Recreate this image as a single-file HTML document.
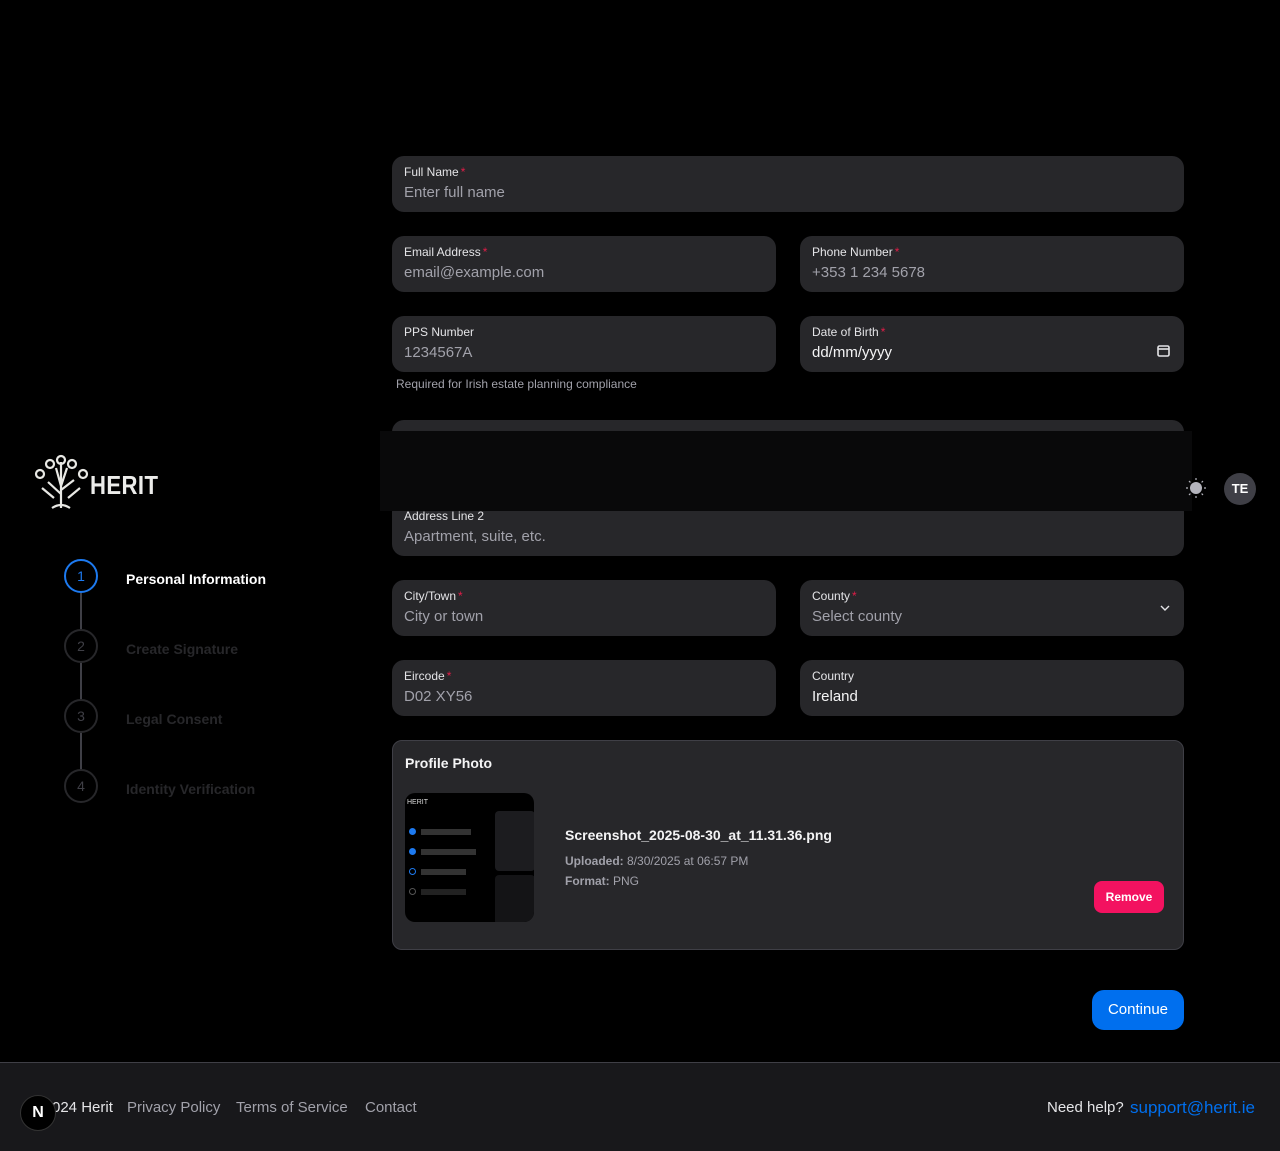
<!DOCTYPE html>
<html><head><meta charset="utf-8"><style>
*{box-sizing:border-box;margin:0;padding:0}
body{width:1280px;height:1151px;background:#000;font-family:"Liberation Sans",sans-serif;position:relative;overflow:hidden;color:#fff}
.f{position:absolute;background:#27272a;border-radius:12px;height:56px;padding:9px 12px}
.f .l{font-size:12px;color:#e4e4e7;line-height:14px;height:16px}
.f .l i{color:#e11d48;font-style:normal;margin-left:2px}
.f .v{font-size:15px;color:#a1a1aa;margin-top:3px;line-height:18px}
.f .v.w{color:#f4f4f5}
.c1{left:392px;width:384px}.c2{left:800px;width:384px}.full{left:392px;width:792px}
.step{position:absolute;left:64px;width:34px;height:34px;border-radius:50%;border:2px solid #27272a;color:#3f3f46;font-size:14px;text-align:center;line-height:30px}
.sl{position:absolute;left:126px;font-size:14px;font-weight:bold;color:#27272a}
.line{position:absolute;left:80px;width:2px;background:#3f3f46}
.ft{position:absolute;top:36px;font-size:15px;color:#a1a1aa}
</style></head><body>

<svg style="position:absolute;left:34px;top:454px" width="56" height="56" viewBox="0 0 56 56" fill="none" stroke="#e8e8e4" stroke-width="2.2">
<path d="M27 54 L27 30 M27 40 L14 28 M27 36 L40 26 M27 32 L22 14 M27 32 L33 14 M27 30 L27 8 M20 44 L8 34 M34 44 L46 34 M18 54 Q27 48 36 54"/>
<circle cx="27" cy="6" r="4"/><circle cx="16" cy="10" r="4"/><circle cx="38" cy="10" r="4"/><circle cx="6" cy="20" r="4"/><circle cx="49" cy="20" r="4"/>
</svg>
<div style="position:absolute;left:90px;top:470px;font-size:26px;font-weight:bold;color:#ececea;letter-spacing:0.5px;transform:scaleX(0.85);transform-origin:left">HERIT</div>

<div class="line" style="top:593px;height:37px"></div>
<div class="line" style="top:663px;height:37px"></div>
<div class="line" style="top:733px;height:37px"></div>
<div class="step" style="top:559px;border-color:#1d7af0;color:#1d7af0">1</div>
<div class="step" style="top:629px">2</div>
<div class="step" style="top:699px">3</div>
<div class="step" style="top:769px">4</div>
<div class="sl" style="top:571px;color:#fff">Personal Information</div>
<div class="sl" style="top:641px">Create Signature</div>
<div class="sl" style="top:711px">Legal Consent</div>
<div class="sl" style="top:781px">Identity Verification</div>

<div class="f full" style="top:156px"><div class="l">Full Name<i>*</i></div><div class="v">Enter full name</div></div>
<div class="f c1" style="top:236px"><div class="l">Email Address<i>*</i></div><div class="v">email@example.com</div></div>
<div class="f c2" style="top:236px"><div class="l">Phone Number<i>*</i></div><div class="v">+353 1 234 5678</div></div>
<div class="f c1" style="top:316px"><div class="l">PPS Number</div><div class="v">1234567A</div></div>
<div class="f c2" style="top:316px"><div class="l">Date of Birth<i>*</i></div><div class="v w">dd/mm/yyyy</div>
<svg style="position:absolute;right:14px;top:28px" width="13" height="13" viewBox="0 0 13 13" fill="none" stroke="#e4e4e7" stroke-width="1.6"><rect x="1" y="2" width="11" height="10" rx="1.5"/><path d="M1 5h11"/></svg></div>
<div style="position:absolute;left:396px;top:377px;font-size:12px;color:#a1a1aa">Required for Irish estate planning compliance</div>

<div class="f full" style="top:420px"></div>
<div class="f full" style="top:500px"><div class="l">Address Line 2</div><div class="v">Apartment, suite, etc.</div></div>
<div style="position:absolute;left:380px;top:431px;width:812px;height:80px;background:#09090a"></div>
<svg style="position:absolute;left:1185px;top:477px" width="22" height="22" viewBox="0 0 22 22"><circle cx="11" cy="11" r="6" fill="#b4b4bc"/><g stroke="#b4b4bc" stroke-width="1.2"><path d="M11 1v2M11 19v2M1 11h2M19 11h2M4 4l1.4 1.4M16.6 16.6L18 18M4 18l1.4-1.4M16.6 5.4L18 4"/></g></svg>
<div style="position:absolute;left:1224px;top:473px;width:32px;height:32px;border-radius:50%;background:#3f3f46;color:#fff;font-size:13px;font-weight:bold;text-align:center;line-height:32px">TE</div>

<div class="f c1" style="top:580px"><div class="l">City/Town<i>*</i></div><div class="v">City or town</div></div>
<div class="f c2" style="top:580px"><div class="l">County<i>*</i></div><div class="v">Select county</div>
<svg style="position:absolute;right:14px;top:24px" width="10" height="8" viewBox="0 0 10 8" fill="none" stroke="#e4e4e7" stroke-width="1.4"><path d="M1 2l4 4 4-4"/></svg></div>
<div class="f c1" style="top:660px"><div class="l">Eircode<i>*</i></div><div class="v">D02 XY56</div></div>
<div class="f c2" style="top:660px"><div class="l">Country</div><div class="v w">Ireland</div></div>

<div style="position:absolute;left:392px;top:740px;width:792px;height:210px;background:#27272a;border:1px solid #3f3f46;border-radius:10px">
<div style="position:absolute;left:12px;top:14px;font-size:14px;font-weight:bold;color:#f4f4f5">Profile Photo</div>
<div style="position:absolute;left:12px;top:52px;width:129px;height:129px;background:#000;border-radius:10px;overflow:hidden">
 <div style="position:absolute;left:2px;top:6px;font-size:7px;color:#ddd">HERIT</div>
 <div style="position:absolute;left:90px;top:18px;width:40px;height:60px;background:#1c1c1f;border-radius:4px"></div>
 <div style="position:absolute;left:90px;top:82px;width:40px;height:50px;background:#141416;border-radius:4px"></div>
 <div style="position:absolute;left:4px;top:35px;width:7px;height:7px;border-radius:50%;background:#1d7af0"></div>
 <div style="position:absolute;left:4px;top:55px;width:7px;height:7px;border-radius:50%;background:#1d7af0"></div>
 <div style="position:absolute;left:4px;top:75px;width:7px;height:7px;border-radius:50%;border:1px solid #1d7af0"></div>
 <div style="position:absolute;left:4px;top:95px;width:7px;height:7px;border-radius:50%;border:1px solid #555"></div>
 <div style="position:absolute;left:16px;top:36px;width:50px;height:6px;background:#333"></div>
 <div style="position:absolute;left:16px;top:56px;width:55px;height:6px;background:#333"></div>
 <div style="position:absolute;left:16px;top:76px;width:45px;height:6px;background:#333"></div>
 <div style="position:absolute;left:16px;top:96px;width:45px;height:6px;background:#222"></div>
</div>
<div style="position:absolute;left:172px;top:86px;font-size:14px;font-weight:bold;color:#f4f4f5">Screenshot_2025-08-30_at_11.31.36.png</div>
<div style="position:absolute;left:172px;top:113px;font-size:12px;color:#a1a1aa"><b>Uploaded:</b> 8/30/2025 at 06:57 PM</div>
<div style="position:absolute;left:172px;top:133px;font-size:12px;color:#a1a1aa"><b>Format:</b> PNG</div>
<div style="position:absolute;left:701px;top:140px;width:70px;height:32px;background:#f31260;border-radius:8px;color:#fff;font-size:12px;font-weight:bold;text-align:center;line-height:32px">Remove</div>
</div>

<div style="position:absolute;left:1092px;top:990px;width:92px;height:40px;background:#006fee;border-radius:12px;color:#fff;font-size:15px;text-align:center;line-height:40px">Continue</div>

<div style="position:absolute;left:0;top:1062px;width:1280px;height:89px;background:#18181b;border-top:1px solid #3f3f46">
<div class="ft" style="left:52px;color:#e4e4e7">024 Herit</div>
<div class="ft" style="left:127px">Privacy Policy</div>
<div class="ft" style="left:236px">Terms of Service</div>
<div class="ft" style="left:365px">Contact</div>
<div class="ft" style="left:1047px;color:#e4e4e7">Need help?</div>
<div style="position:absolute;left:1130px;top:35px;font-size:17px;color:#006fee">support@herit.ie</div>
</div>
<div style="position:absolute;left:20px;top:1095px;width:36px;height:36px;border-radius:50%;background:#000;border:1px solid #333;color:#fff;font-size:16px;font-weight:bold;text-align:center;line-height:34px">N</div>
</body></html>
